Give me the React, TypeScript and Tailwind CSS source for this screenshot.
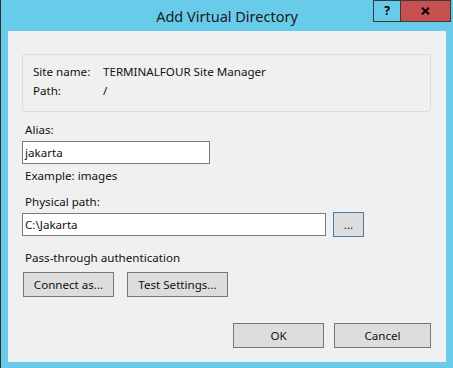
import React from 'react';

const font = { fontFamily: '"Noto Sans", "Segoe UI", sans-serif' };

const Btn: React.FC<{ label: string; className?: string }> = ({ label, className = '' }) => (
  <button
    className={`h-[25px] border border-[#767676] bg-[#dddddd] text-[11.6px] leading-none text-[#111] ${className}`}
  >
    {label}
  </button>
);

const App: React.FC = () => {
  return (
    <div
      className="w-[453px] h-[368px] flex flex-col bg-[#68cbea] border-l border-[#2c2c2c] pl-[7px] pr-[7px] pb-[6px] text-[11.6px] leading-[16px] text-[#111]"
      style={font}
    >
      {/* Title bar */}
      <div className="relative h-[31px] -ml-[7px] -mr-[7px] flex items-center justify-center">
        <span className="text-[14.5px] leading-[20px] text-[#1a1a1a] pt-[1px]">Add Virtual Directory</span>
        <div className="absolute right-[2px] top-0 flex h-[22px] border border-[#3a3a3a]">
          <div className="w-[27px] flex items-center justify-center border-r border-[#3a3a3a] text-[12px] font-bold text-black">
            ?
          </div>
          <div className="w-[49px] flex items-center justify-center bg-[#c75050]">
            <svg width="9" height="8" viewBox="0 0 9 8" aria-hidden="true">
              <path d="M1 0.8 L8 7.2 M8 0.8 L1 7.2" stroke="#000" strokeWidth="2" />
            </svg>
          </div>
        </div>
      </div>

      {/* Body */}
      <div className="flex-1 bg-[#f0f0f0] pt-[23px] pl-[14px] pr-[15px] flex flex-col">
        <div className="h-[58px] border border-[#d9dde0] rounded-[3px] pt-[9px] pl-[10px]">
          <div className="flex h-[19px]">
            <span className="w-[70px]">Site name:</span>
            <span>TERMINALFOUR Site Manager</span>
          </div>
          <div className="flex h-[16px]">
            <span className="w-[70px]">Path:</span>
            <span>/</span>
          </div>
        </div>

        <div className="mt-[10px] ml-[3px] h-[16px]">Alias:</div>
        <div className="mt-[3px] w-[188px] h-[23px] border border-[#7a7a7a] bg-white pl-[2px] leading-[21px]">
          jakarta
        </div>
        <div className="mt-[4px] ml-[3px] h-[16px]">Example: images</div>

        <div className="mt-[10px] ml-[3px] h-[16px]">Physical path:</div>
        <div className="mt-[2px] flex items-center">
          <div className="w-[304px] h-[23px] border border-[#7a7a7a] bg-white pl-[2px] leading-[21px]">
            C:\Jakarta
          </div>
          <button className="ml-[7px] w-[31px] h-[25px] border border-[#3c7fb1] bg-[#dddddd] text-[11.6px] leading-none text-[#111]">
            ...
          </button>
        </div>

        <div className="mt-[13px] ml-[3px] h-[16px]">Pass-through authentication</div>
        <div className="mt-[6px] flex gap-[13px] ml-[1px]">
          <Btn label="Connect as..." className="w-[91px]" />
          <Btn label="Test Settings..." className="w-[101px]" />
        </div>

        <div className="mt-[26px] flex justify-end gap-[10px]">
          <Btn label="OK" className="w-[91px]" />
          <Btn label="Cancel" className="w-[97px]" />
        </div>
      </div>
    </div>
  );
};

export default App;
